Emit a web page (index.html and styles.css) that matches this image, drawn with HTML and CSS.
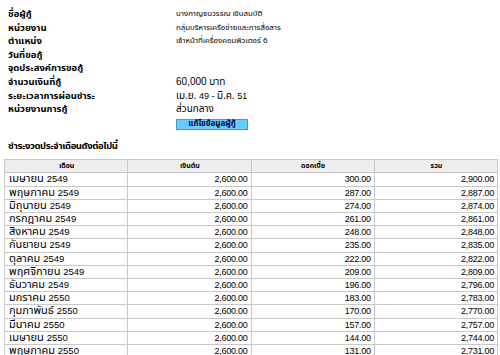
FILE: index.html
```html
<!DOCTYPE html>
<html lang="th">
<head>
<meta charset="utf-8">
<link rel="stylesheet" href="styles.css">
</head>
<body>
<div class="info">
  <div class="lbl">ชื่อผู้กู้</div><div class="val sm">นางกาญจนวรรณ เงินสมบัติ</div>
  <div class="lbl">หน่วยงาน</div><div class="val sm">กลุ่มบริหารเครือข่ายและการสื่อสาร</div>
  <div class="lbl">ตำแหน่ง</div><div class="val sm">เจ้าหน้าที่เครื่องคอมพิวเตอร์ 6</div>
  <div class="lbl">วันที่ขอกู้</div><div class="val"></div>
  <div class="lbl">จุดประสงค์การขอกู้</div><div class="val"></div>
  <div class="lbl">จำนวนเงินที่กู้</div><div class="val"><span class="num">60,000</span> บาท</div>
  <div class="lbl">ระยะเวลาการผ่อนชำระ</div><div class="val">เม.ย. <span class="num sn">49 - </span>มิ.ค. <span class="num sn">51</span></div>
  <div class="lbl">หน่วยงานการกู้</div><div class="val">ส่วนกลาง</div>
  <div class="lbl"></div><div class="val"><span class="btn">แก้ไขข้อมูลผู้กู้</span></div>
</div>
<div class="title">ชำระงวดประจำเดือนดังต่อไปนี้</div>
<table class="pay">
  <thead>
    <tr><th>เดือน</th><th>เงินต้น</th><th>ดอกเบี้ย</th><th>รวม</th></tr>
  </thead>
  <tbody>
    <tr><td>เมษายน <span class="num">2549</span></td><td class="n">2,600.00</td><td class="n">300.00</td><td class="n">2,900.00</td></tr>
    <tr><td>พฤษภาคม <span class="num">2549</span></td><td class="n">2,600.00</td><td class="n">287.00</td><td class="n">2,887.00</td></tr>
    <tr><td>มิถุนายน <span class="num">2549</span></td><td class="n">2,600.00</td><td class="n">274.00</td><td class="n">2,874.00</td></tr>
    <tr><td>กรกฎาคม <span class="num">2549</span></td><td class="n">2,600.00</td><td class="n">261.00</td><td class="n">2,861.00</td></tr>
    <tr><td>สิงหาคม <span class="num">2549</span></td><td class="n">2,600.00</td><td class="n">248.00</td><td class="n">2,848.00</td></tr>
    <tr><td>กันยายน <span class="num">2549</span></td><td class="n">2,600.00</td><td class="n">235.00</td><td class="n">2,835.00</td></tr>
    <tr><td>ตุลาคม <span class="num">2549</span></td><td class="n">2,600.00</td><td class="n">222.00</td><td class="n">2,822.00</td></tr>
    <tr><td>พฤศจิกายน <span class="num">2549</span></td><td class="n">2,600.00</td><td class="n">209.00</td><td class="n">2,809.00</td></tr>
    <tr><td>ธันวาคม <span class="num">2549</span></td><td class="n">2,600.00</td><td class="n">196.00</td><td class="n">2,796.00</td></tr>
    <tr><td>มกราคม <span class="num">2550</span></td><td class="n">2,600.00</td><td class="n">183.00</td><td class="n">2,783.00</td></tr>
    <tr><td>กุมภาพันธ์ <span class="num">2550</span></td><td class="n">2,600.00</td><td class="n">170.00</td><td class="n">2,770.00</td></tr>
    <tr><td>มีนาคม <span class="num">2550</span></td><td class="n">2,600.00</td><td class="n">157.00</td><td class="n">2,757.00</td></tr>
    <tr><td>เมษายน <span class="num">2550</span></td><td class="n">2,600.00</td><td class="n">144.00</td><td class="n">2,744.00</td></tr>
    <tr><td>พฤษภาคม <span class="num">2550</span></td><td class="n">2,600.00</td><td class="n">131.00</td><td class="n">2,731.00</td></tr>
    <tr><td>มิถุนายน <span class="num">2550</span></td><td class="n">2,600.00</td><td class="n">118.00</td><td class="n">2,718.00</td></tr>
  </tbody>
</table>
</body>
</html>
```
FILE: styles.css
```css
html, body {
  margin: 0;
  padding: 0;
  background: #ffffff;
}
body {
  font-family: "Tahoma", "Noto Sans Thai", "Liberation Sans", sans-serif;
  font-size: 11px;
  color: #000000;
  padding: 8px 2px 0 4px;
}
.num {
  font-family: "Liberation Sans", sans-serif;
  font-size: 10px;
  line-height: 8px;
}
.num.sn {
  font-size: 9px;
}
.info {
  display: grid;
  grid-template-columns: 168px 1fr;
  grid-auto-rows: 13.6px;
  line-height: 13.6px;
  padding-left: 4px;
}
.lbl {
  font-weight: bold;
  font-size: 9.5px;
  white-space: nowrap;
}
.val {
  white-space: nowrap;
  font-size: 10px;
}
.val.sm {
  font-size: 7.8px;
}
.btn {
  display: inline-block;
  margin-top: 2px;
  width: 70px;
  height: 9px;
  line-height: 9px;
  background: #66ccff;
  border: 1px solid #3b9fd6;
  font-weight: bold;
  font-size: 8px;
  text-align: center;
  color: #000033;
}
.title {
  font-weight: bold;
  font-size: 9.5px;
  letter-spacing: -0.4px;
  padding: 9px 0 0 4px;
  height: 14px;
  line-height: 14px;
}
.pay {
  margin-top: 6px;
  width: 494px;
  border-collapse: collapse;
  table-layout: fixed;
}
.pay th, .pay td {
  border: 1px solid #c8c8c8;
  padding: 0 3px 0 4px;
  height: 12.2px;
  line-height: 12.2px;
  white-space: nowrap;
}
.pay th {
  background: #eeeeee;
  font-weight: bold;
  font-size: 7px;
  text-align: center;
  height: 12px;
  line-height: 12px;
}
.pay td .num {
  font-size: 9.5px;
}
.pay td.n {
  text-align: right;
  font-family: "Liberation Sans", sans-serif;
  font-size: 9px;
  letter-spacing: -0.25px;
}
```
